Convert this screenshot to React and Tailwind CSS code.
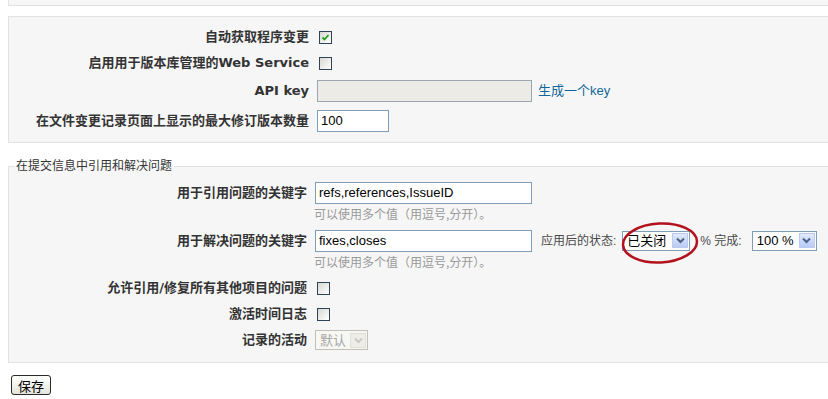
import React from "react";

const LBL = "font-['DejaVu_Sans','Noto_Sans_CJK_SC',sans-serif] font-bold text-[13px] text-[#333] text-right whitespace-nowrap";
const NORM = "font-['Liberation_Sans','Noto_Sans_CJK_SC',sans-serif] text-[12px] text-[#484848] whitespace-nowrap";
const HINT = "font-['Noto_Sans_CJK_SC',sans-serif] text-[12px] text-[#999] whitespace-nowrap";

function Checkbox({ checked }) {
  return (
    <div className="w-[13px] h-[13px] border border-[#2f4256] bg-gradient-to-br from-[#d8d8d2] to-white flex items-center justify-center">
      {checked && (
        <svg width="9" height="9" viewBox="0 0 9 9">
          <path d="M1.5 4.5 L3.5 6.5 L7.5 2" stroke="#21a121" strokeWidth="1.8" fill="none" />
        </svg>
      )}
    </div>
  );
}

function Chevron({ disabled }) {
  return (
    <div className={`w-[16px] h-[15px] flex items-center justify-center border ${disabled ? "border-[#e0dfd8] bg-[#eeede8]" : "border-[#b9c9ef] bg-gradient-to-b from-[#e1eafe] to-[#b7cbf5]"}`}>
      <svg width="9" height="7" viewBox="0 0 9 7">
        <path d="M1 1.5 L4.5 5 L8 1.5" stroke={disabled ? "#c9c9c0" : "#4d6185"} strokeWidth="2" fill="none" />
      </svg>
    </div>
  );
}

function Select({ text, width, disabled }) {
  return (
    <div
      className={`h-[20px] border ${disabled ? "border-[#c0c0b8] bg-[#f7f7f4]" : "border-[#7f9db9] bg-white"} flex items-center justify-between pl-[4px] pr-[1px]`}
      style={{ width }}
    >
      <span className={`font-['Liberation_Sans','Noto_Sans_CJK_SC',sans-serif] text-[13px] ${disabled ? "text-[#a8a8a8]" : "text-black"} leading-none`}>{text}</span>
      <Chevron disabled={disabled} />
    </div>
  );
}

function Input({ value, width, disabled }) {
  return (
    <div
      className={`h-[22px] border ${disabled ? "border-[#9aa6b0] bg-[#ecebe6]" : "border-[#7f9db9] bg-white"} flex items-center pl-[3px]`}
      style={{ width }}
    >
      <span className="font-['Liberation_Sans',sans-serif] text-[13px] text-black">{value}</span>
    </div>
  );
}

function Row({ label, h = 26, labelW = 300, gap = 10, children }) {
  return (
    <div className="flex items-center" style={{ height: h }}>
      <div className={LBL} style={{ width: labelW }}>{label}</div>
      <div className="flex items-center" style={{ marginLeft: gap }}>{children}</div>
    </div>
  );
}

export default function App() {
  return (
    <div className="relative w-[828px] h-[399px] overflow-hidden bg-white">
      {/* previous box bottom */}
      <div className="ml-[8px] w-[840px] h-[6px] bg-[#f6f6f6] border-x border-b border-[#e2e2e2]" />

      {/* box 1 */}
      <div className="ml-[8px] mt-[10px] w-[840px] bg-[#f6f6f6] border border-[#e2e2e2] pt-[7px] pb-[6px]">
        <Row label="自动获取程序变更" h={26}>
          <Checkbox checked />
        </Row>
        <Row label="启用用于版本库管理的Web Service" h={26}>
          <Checkbox />
        </Row>
        <Row label="API key" h={30} gap={8}>
          <Input disabled width={215} />
          <span className="ml-[6px] font-['Liberation_Sans','Noto_Sans_CJK_SC',sans-serif] text-[13px] text-[#116699]">生成一个key</span>
        </Row>
        <Row label="在文件变更记录页面上显示的最大修订版本数量" h={30} gap={8}>
          <Input value="100" width={72} />
        </Row>
      </div>

      {/* fieldset */}
      <fieldset className="ml-[8px] mt-[15px] w-[840px] bg-[#f6f6f6] border border-[#e2e2e2] pb-[9px]">
        <legend className="ml-[5px] px-[2px] font-['Liberation_Sans','Noto_Sans_CJK_SC',sans-serif] text-[12px] leading-[16px] text-[#333]">
          在提交信息中引用和解决问题
        </legend>
        <div className="mt-[6px]">
          <Row label="用于引用问题的关键字" h={25} labelW={298} gap={8}>
            <Input value="refs,references,IssueID" width={217} />
          </Row>
          <div className="h-[18px] flex items-center pl-[305px]">
            <span className={HINT}>可以使用多个值（用逗号,分开）。</span>
          </div>
          <div className="mt-[5px]">
            <Row label="用于解决问题的关键字" h={25} labelW={298} gap={8}>
              <Input value="fixes,closes" width={217} />
              <span className={`${NORM} ml-[9px]`}>应用后的状态:</span>
              <div className="ml-[6px]">
                <Select text="已关闭" width={68} />
              </div>
              <span className={`${NORM} ml-[10px]`}>% 完成:</span>
              <div className="ml-[10px]">
                <Select text="100 %" width={65} />
              </div>
            </Row>
          </div>
          <div className="h-[18px] flex items-center pl-[305px]">
            <span className={HINT}>可以使用多个值（用逗号,分开）。</span>
          </div>
          <div className="mt-[4px]">
            <Row label="允许引用/修复所有其他项目的问题" h={26} labelW={298} gap={10}>
              <Checkbox />
            </Row>
            <Row label="激活时间日志" h={26} labelW={298} gap={10}>
              <Checkbox />
            </Row>
            <Row label="记录的活动" h={26} labelW={298} gap={8}>
              <Select text="默认" width={53} disabled />
            </Row>
          </div>
        </div>
      </fieldset>

      {/* save button */}
      <div className="ml-[11px] mt-[12px] w-[40px] h-[20px] border border-[#2a2a2a] rounded-[3px] bg-gradient-to-b from-white to-[#e6e4da] flex items-center justify-center">
        <span className="font-['Noto_Sans_CJK_SC',sans-serif] text-[13px] leading-none text-black">保存</span>
      </div>

      {/* red annotation ellipse */}
      <svg className="absolute left-[615px] top-[218px] pointer-events-none" width="90" height="52" viewBox="0 0 90 52">
        <ellipse cx="45" cy="25" rx="37" ry="19.5" transform="rotate(-3 45 25)" fill="none" stroke="#b3121d" strokeWidth="2.5" />
      </svg>
    </div>
  );
}
